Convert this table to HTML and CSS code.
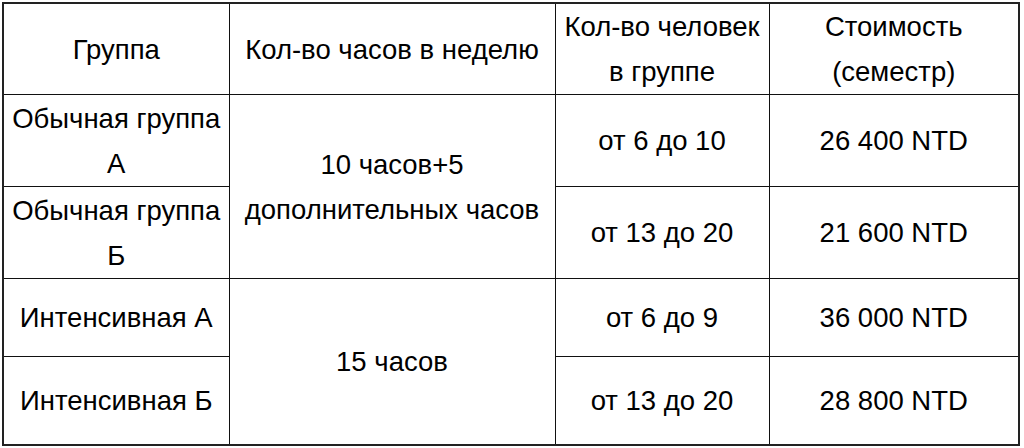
FILE: index.html
```html
<!DOCTYPE html>
<html lang="ru">
<head>
<meta charset="utf-8">
<link rel="stylesheet" href="styles.css">
</head>
<body>
<table class="price">
  <colgroup>
    <col class="c1"><col class="c2"><col class="c3"><col class="c4">
  </colgroup>
  <tr class="r-head">
    <td>Группа</td>
    <td>Кол-во часов в неделю</td>
    <td>Кол-во человек в группе</td>
    <td>Стоимость (семестр)</td>
  </tr>
  <tr class="r-a">
    <td>Обычная группа А</td>
    <td rowspan="2">10 часов+5 дополнительных часов</td>
    <td>от 6 до 10</td>
    <td>26 400 NTD</td>
  </tr>
  <tr class="r-b">
    <td>Обычная группа Б</td>
    <td>от 13 до 20</td>
    <td>21 600 NTD</td>
  </tr>
  <tr class="r-c">
    <td>Интенсивная А</td>
    <td rowspan="2">15 часов</td>
    <td>от 6 до 9</td>
    <td>36 000 NTD</td>
  </tr>
  <tr class="r-d">
    <td>Интенсивная Б</td>
    <td>от 13 до 20</td>
    <td>28 800 NTD</td>
  </tr>
</table>
</body>
</html>
```

FILE: styles.css
```css
html, body {
  margin: 0;
  padding: 0;
  background: #ffffff;
}
body {
  padding: 2px 0 0 2px;
  font-family: "Liberation Sans", Arial, sans-serif;
  color: #000000;
}
.price {
  border-collapse: collapse;
  table-layout: fixed;
  width: 1016px;
  font-size: 27.5px;
  line-height: 45px;
  border: 2px solid #222222;
}
.c1 { width: 226px; }
.c2 { width: 326px; }
.c3 { width: 214px; }
.c4 { width: 250px; }
.price td {
  border: 1px solid #111111;
  text-align: center;
  vertical-align: middle;
  padding: 0 4px;
}
.r-head { height: 89px; }
.r-a, .r-b { height: 92px; }
.r-c { height: 78px; }
.r-d { height: 88px; }
```
